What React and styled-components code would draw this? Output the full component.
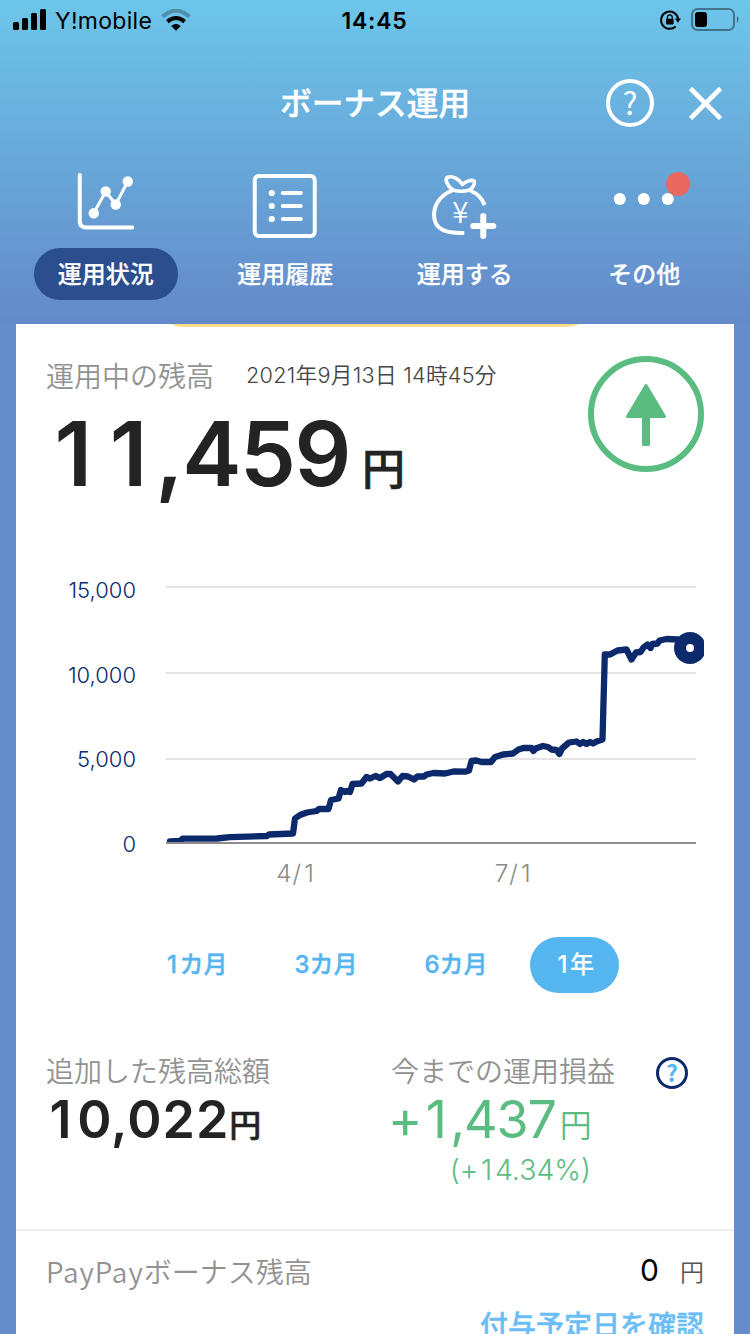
import React from "react";
import styled, { createGlobalStyle } from "styled-components";

const jp = `"Noto Sans CJK JP", sans-serif`;
const num = `Inter, "Noto Sans CJK JP", sans-serif`;

const GlobalStyle = createGlobalStyle`
    * {
        box-sizing: border-box;
    }
    body {
        margin: 0;
        background-color: #658ccb;
        font-family: ${jp};
    }
    svg {
        display: block;
        flex-shrink: 0;
    }
`;

const Screen = styled.div`
    width: 750px;
    height: 1334px;
    overflow: hidden;
    display: flex;
    flex-direction: column;
    background-color: #658ccb;
`;

const Header = styled.header`
    height: 324px;
    flex-shrink: 0;
    background: linear-gradient(#6dc6ea 0%, #68aada 46%, #6489c9 100%);
`;

const StatusBar = styled.div`
    height: 40px;
    padding: 0 11px 0 13px;
    display: grid;
    grid-template-columns: 1fr auto 1fr;
    align-items: center;
    color: #000;
    font-family: ${num};
`;

const StatusSide = styled.div`
    display: flex;
    align-items: center;
    justify-content: ${({ $end }) => ($end ? "flex-end" : "flex-start")};
    gap: ${({ $end }) => ($end ? "10px" : "9px")};
`;

const Carrier = styled.span`
    padding-top: 2px;
    font-size: 23px;
    line-height: 38px;
    letter-spacing: 0.3px;
`;

const Clock = styled.span`
    padding-top: 2px;
    margin-right: 3px;
    font-size: 23px;
    line-height: 38px;
    font-weight: 600;
    letter-spacing: 0.8px;
`;

const TitleBar = styled.div`
    height: 126px;
    padding: 0 28px;
    display: grid;
    grid-template-columns: 1fr auto 1fr;
    align-items: center;
`;

const Title = styled.h1`
    grid-column: 2;
    margin: 0;
    padding-bottom: 4px;
    color: #fff;
    font-size: 31.7px;
    line-height: 48px;
    font-weight: 500;
    -webkit-text-stroke: 0.4px #fff;
`;

const TitleActions = styled.div`
    display: flex;
    justify-content: flex-end;
    align-items: center;
    gap: 34px;
`;

const HelpButton = styled.button`
    width: ${({ $size }) => $size}px;
    height: ${({ $size }) => $size}px;
    padding: 0 0 ${({ $small }) => ($small ? 2 : 4)}px;
    border: ${({ $small }) => ($small ? "3px solid #0b296b" : "4px solid #fff")};
    border-radius: 50%;
    background: none;
    color: ${({ $small }) => ($small ? "#55b5ef" : "#fff")};
    font-family: ${jp};
    font-size: ${({ $small }) => ($small ? 23 : 31)}px;
    font-weight: ${({ $small }) => ($small ? 700 : 400)};
    line-height: 1;
    display: flex;
    align-items: center;
    justify-content: center;
`;

const Nav = styled.nav`
    padding: 4px 16px 0;
    display: grid;
    grid-template-columns: repeat(4, 1fr);
`;

const NavItem = styled.div`
    display: flex;
    flex-direction: column;
    align-items: center;
    gap: 6px;
`;

const IconBox = styled.div`
    position: relative;
    width: 72px;
    height: 72px;
`;

const Badge = styled.span`
    position: absolute;
    top: 2px;
    right: -10px;
    width: 24px;
    height: 24px;
    border-radius: 50%;
    background-color: #ea6860;
`;

const NavLabel = styled.span`
    width: 144px;
    height: 52px;
    border-radius: 26px;
    background-color: ${({ $active }) => ($active ? "#2b4e8e" : "transparent")};
    color: #fff;
    font-size: 24px;
    line-height: 49px;
    font-weight: 500;
    -webkit-text-stroke: 0.2px #fff;
    text-align: center;
`;

const Card = styled.main`
    width: 718px;
    height: 1010px;
    flex-shrink: 0;
    margin: 0 auto;
    background-color: #fff;
    overflow: hidden;
`;

const BannerEdge = styled.div`
    height: 3px;
    overflow: hidden;
    display: flex;
    align-items: flex-end;
    justify-content: center;
`;

const Banner = styled.div`
    width: 436px;
    height: 60px;
    flex-shrink: 0;
    border-radius: 26px;
    background-color: #fddd8c;
`;

const Balance = styled.section`
    height: 253px;
    padding: 29px 30px 0;
    display: flex;
    justify-content: space-between;
    align-items: flex-start;
`;

const BalanceHead = styled.div`
    display: flex;
    align-items: center;
    gap: 32px;
    height: 40px;
`;

const Label = styled.span`
    margin-bottom: 2px;
    color: #929292;
    font-size: 28px;
    line-height: 38px;
    font-weight: 350;
    white-space: nowrap;
`;

const Brand = styled.span`
    letter-spacing: 0.9px;
`;

const DateText = styled.span`
    margin-bottom: 3px;
    color: #444;
    font-family: ${num};
    font-size: 21.7px;
    line-height: 36px;
    font-weight: 350;
    letter-spacing: 0.25px;
    white-space: nowrap;
`;

// gives the narrow "1" the same advance as the other digits
const One = styled.span`
    display: inline-block;
    width: ${({ $width }) => $width}em;
    text-align: center;
`;

const BalanceAmount = styled.div`
    display: flex;
    align-items: baseline;
    gap: 12px;
    margin-left: -1px;
    color: #232323;
    font-family: ${num};
    font-size: 89px;
    line-height: 116px;
    font-weight: 600;
    letter-spacing: -1.5px;
    white-space: nowrap;
`;

const BalanceYen = styled.span`
    font-family: ${jp};
    font-size: 43px;
    line-height: 1;
    font-weight: 500;
    -webkit-text-stroke: 0.7px #232323;
    transform: translateY(-1px);
`;

const Trend = styled.div`
    width: 116px;
    height: 116px;
    padding-top: 2px;
    border: 6px solid #5abc80;
    border-radius: 50%;
    display: flex;
    align-items: center;
    justify-content: center;
`;

const ChartRow = styled.section`
    display: flex;
    padding-left: 30px;
`;

const YAxis = styled.div`
    width: 90px;
    margin-right: 30px;
    height: 270px;
    display: flex;
    flex-direction: column;
    color: #0b296b;
    font-family: ${num};
    font-size: 22px;
    font-weight: 300;
    line-height: 20px;
    gap: 64.5px;
    text-align: right;
`;

const XAxis = styled.div`
    height: 46px;
    padding-left: 172px;
    display: flex;
    color: #8a8a8a;
    font-family: ${num};
    font-size: 24.5px;
    line-height: 46px;
    font-weight: 300;
    letter-spacing: 0.9px;
`;

const XTick = styled.span`
    width: 217.5px;
    text-align: center;
`;

const Periods = styled.div`
    margin: 41px 0 0 124px;
    display: flex;
    gap: 18px;
`;

const Period = styled.button`
    width: ${({ $active }) => ($active ? 89 : 112)}px;
    height: 56px;
    padding: 0 0 1px;
    border: none;
    border-radius: 28px;
    background-color: ${({ $active }) => ($active ? "#55b5ef" : "transparent")};
    color: ${({ $active }) => ($active ? "#fff" : "#55b5ef")};
    font-family: ${num};
    font-size: 24px;
    line-height: 54px;
    font-weight: 500;
    -webkit-text-stroke: ${({ $active }) => ($active ? 0.1 : 0.4)}px;
    white-space: nowrap;
`;

const Totals = styled.section`
    height: 236px;
    padding: 58px 46px 0 30px;
    display: flex;
    align-items: flex-start;
`;

const Total = styled.div`
    width: ${({ $first }) => ($first ? "345px" : "224px")};
    color: ${({ $first }) => ($first ? "#232323" : "#5abc80")};
    display: flex;
    flex-direction: column;
`;

const TotalAmount = styled.div`
    display: flex;
    align-items: baseline;
    gap: ${({ $bold }) => ($bold ? 0 : 4)}px;
    margin-left: ${({ $bold }) => ($bold ? -1 : -3)}px;
    font-family: ${num};
    font-size: 52px;
    line-height: 57px;
    font-weight: ${({ $bold }) => ($bold ? 600 : 400)};
    white-space: nowrap;
    letter-spacing: ${({ $bold }) => ($bold ? 1 : -1.2)}px;
`;

const TotalYen = styled.span`
    font-family: ${jp};
    font-size: 32px;
    line-height: 1;
    font-weight: ${({ $bold }) => ($bold ? 500 : 350)};
    -webkit-text-stroke: ${({ $bold }) => ($bold ? 0.6 : 0)}px;
    transform: translateY(-1px);
`;

const Percent = styled.span`
    width: 200px;
    text-align: right;
    font-family: ${num};
    font-size: 28.5px;
    line-height: 44px;
    font-weight: 350;
`;

const HelpSlot = styled.div`
    margin-left: auto;
    padding-top: 6px;
`;

const BonusRow = styled.section`
    border-top: 2px solid #eee;
    height: 84px;
    padding: 0 30px;
    display: flex;
    align-items: center;
    justify-content: space-between;
`;

const BonusValue = styled.span`
    margin-bottom: 3px;
    display: flex;
    align-items: baseline;
    gap: 21px;
    color: #000;
    font-family: ${num};
    font-size: 30px;
    line-height: 40px;
`;

const BonusYen = styled.span`
    color: #555;
    font-family: ${jp};
    font-size: 24px;
    font-weight: 350;
`;

const BonusLink = styled.a`
    display: block;
    padding: 0 30px;
    margin-top: -9px;
    color: #6bbdf6;
    font-size: 28px;
    line-height: 40px;
    font-weight: 500;
    -webkit-text-stroke: 0.4px #6bbdf6;
    text-align: right;
`;

const Figures = ({ value, one = 0.62 }) => (
    <span>
        {[...value].map((char, i) =>
            char === "1" ? (
                <One key={i} $width={one}>
                    1
                </One>
            ) : (
                char
            )
        )}
    </span>
);

const Signal = () => (
    <svg width="33" height="22" viewBox="0 0 33 22">
        <rect x="0" y="13" width="6" height="8" rx="1.5" />
        <rect x="9" y="9" width="6" height="12" rx="1.5" />
        <rect x="18" y="4" width="6" height="17" rx="1.5" />
        <rect x="27" y="0" width="6" height="21" rx="1.5" />
    </svg>
);

const Wifi = () => (
    <svg width="30" height="22" viewBox="0 0 30 22" fill="none">
        <path
            d="M1.6 7.6 Q15 -4.2 28.4 7.6"
            stroke="#000"
            strokeOpacity="0.27"
            strokeWidth="4"
        />
        <path d="M6.4 12.6 Q15 5.4 23.6 12.6" stroke="#000" strokeWidth="4" />
        <path d="M10.2 17 Q15 13 19.8 17 L15 21.8 Z" fill="#000" />
    </svg>
);

const RotationLock = () => (
    <svg width="21" height="20" viewBox="0 0 21 20" fill="none">
        <path
            d="M15.6 16.4 A8.6 8.6 0 1 1 18.2 9"
            stroke="#000"
            strokeWidth="2"
        />
        <path d="M14.8 8.4 H21 L17.9 12.8 Z" fill="#000" />
        <rect x="6" y="8.8" width="7.6" height="5.6" rx="0.8" fill="#000" />
        <path
            d="M7.4 9 V7.2 A2.4 2.4 0 0 1 12.2 7.2 V9"
            stroke="#000"
            strokeWidth="1.3"
        />
    </svg>
);

const Battery = () => (
    <svg width="48" height="24" viewBox="0 0 48 24">
        <rect
            x="1"
            y="1"
            width="42"
            height="21"
            rx="5.5"
            fill="none"
            stroke="#000"
            strokeOpacity="0.4"
            strokeWidth="2"
        />
        <rect x="4" y="4" width="12" height="15" rx="3" />
        <path d="M46 8 Q49 11.5 46 15 Z" fillOpacity="0.5" />
    </svg>
);

const Close = () => (
    <svg width="34" height="34" viewBox="0 0 34 34">
        <path
            d="M2.5 2.5 L32.5 32.5 M32.5 2.5 L2.5 32.5"
            stroke="#fff"
            strokeWidth="4.6"
            fill="none"
        />
    </svg>
);

const ChartIcon = () => (
    <svg width="72" height="72" viewBox="69.75 170 72 72" fill="none">
        <path
            d="M79.5 175 V221 Q79.5 227.5 86 227.5 H132"
            stroke="#fff"
            strokeWidth="4"
            strokeLinecap="round"
        />
        <path
            d="M93.5 213 L105.5 191.5 L115.5 204.5 L127.5 181.5"
            stroke="#fff"
            strokeWidth="3"
        />
        <g fill="#fff">
            <circle cx="93.5" cy="213.2" r="5.2" />
            <circle cx="105.5" cy="191.5" r="5.2" />
            <circle cx="115.5" cy="204.5" r="5.2" />
            <circle cx="127.5" cy="181.5" r="5.2" />
        </g>
    </svg>
);

const ListIcon = () => (
    <svg width="72" height="72" viewBox="249.25 170 72 72" fill="none">
        <rect
            x="255"
            y="176"
            width="60"
            height="60"
            rx="4"
            stroke="#fff"
            strokeWidth="4"
        />
        <g fill="#fff">
            <circle cx="272" cy="193" r="3.1" />
            <circle cx="272" cy="206" r="3.1" />
            <circle cx="272" cy="219" r="3.1" />
        </g>
        <path
            d="M283 193 H301 M283 206 H301 M283 219 H301"
            stroke="#fff"
            strokeWidth="4"
            strokeLinecap="round"
        />
    </svg>
);

const BagIcon = () => (
    <svg width="72" height="72" viewBox="428.75 170 72 72" fill="none">
        <g stroke="#fff" strokeWidth="4">
            <path d="M452 190.5 C440 195 433.8 205 433.8 215 C433.8 229 445 233.6 464 233" />
            <path d="M470 190.5 C477 193.5 482 198.5 484.4 205" />
            <path
                d="M452.5 190 C447 186 444 179 447.5 177.2 C453 175.5 459 179.5 462.3 184.5 C466 181 471 179.5 473.8 181 C475.3 183.5 472.5 188 469.5 190 Q461 192.6 452.5 190 Z"
                strokeWidth="3.6"
                strokeLinejoin="round"
            />
        </g>
        <text
            x="460"
            y="222.7"
            fill="#fff"
            fontFamily="Noto Sans CJK JP"
            fontWeight="350"
            fontSize="29.5"
            textAnchor="middle"
        >
            ¥
        </text>
        <path
            d="M483 216 V236 M473 226 H493"
            stroke="#fff"
            strokeWidth="6"
            strokeLinecap="round"
        />
    </svg>
);

const MoreIcon = () => (
    <svg width="72" height="72" viewBox="608.25 170 72 72" fill="#fff">
        <circle cx="620" cy="199" r="6" />
        <circle cx="644" cy="199" r="6" />
        <circle cx="668" cy="199" r="6" />
    </svg>
);

const ArrowUp = () => (
    <svg width="42" height="62" viewBox="0 0 42 62" fill="#5abc80">
        <path
            d="M21 1.5 L39.5 32.5 H2.5 Z"
            stroke="#5abc80"
            strokeWidth="3"
            strokeLinejoin="round"
        />
        <rect x="17" y="30" width="8" height="32" rx="1.5" />
    </svg>
);

// x and y of each day's balance on the 166..704 / 580..850 plot area
const points = [
    [170, 841.5], [180, 841], [182.5, 838.7], [217, 838.5], [230, 837.2],
    [267, 836], [269, 834.5], [293, 833.5], [295, 818.5], [300, 815],
    [307, 812.5], [316.5, 811], [319, 809], [328.5, 809], [331, 800],
    [338.5, 798.5], [341, 790], [345, 792], [347, 791], [350, 792],
    [352.5, 784], [361.5, 783.5], [366.5, 777], [370, 778.5], [375.5, 776],
    [380, 778], [386.5, 774], [390.5, 774], [398, 781.5], [402.5, 776],
    [408, 776.5], [414, 779.5], [417.5, 776.5], [424, 776.5], [426.5, 774.5],
    [433.5, 773], [445, 773.5], [453.5, 771.5], [465, 771.7], [469, 770.5],
    [471.5, 761], [476.5, 760.5], [481.5, 762], [491, 762], [495, 757],
    [503, 754.5], [513, 753.5], [518.5, 749.5], [523.5, 748], [531.5, 748],
    [533.5, 751], [535.5, 748.5], [543, 746], [548, 747], [551.5, 749.5],
    [556.5, 750], [559.5, 754], [562, 748.5], [569, 742.5], [576.5, 741.5],
    [580, 744], [583, 742], [586.5, 744], [590, 742], [593, 743.5],
    [596.5, 741.5], [602.5, 739.5], [604.8, 654.5], [610, 654.5],
    [617.5, 650.5], [626.5, 649.5], [631.5, 659.5], [636, 652.5],
    [640.5, 652], [643.5, 647.5], [647.5, 644.5], [650.5, 648], [652.5, 644],
    [657.5, 643.5], [659.5, 640.5], [666.5, 639], [678, 639.5], [688, 646],
];

const BalanceChart = () => (
    <svg width="538" height="270" viewBox="166 580 538 270" fill="none">
        <path
            d="M166 587 H696 M166 673 H696 M166 759 H696"
            stroke="#e4e4e4"
            strokeWidth="2"
        />
        <polyline
            points={points.map((p) => p.join(",")).join(" ")}
            stroke="#0b296b"
            strokeWidth="6.3"
            strokeLinecap="round"
            strokeLinejoin="round"
        />
        <path d="M166 844 H696" stroke="#fff" strokeWidth="4" />
        <path d="M166 843 H696" stroke="#8f8c8f" strokeWidth="2" />
        <circle cx="690" cy="648" r="16" fill="#0b296b" />
        <circle cx="690" cy="648" r="4" fill="#fff" />
    </svg>
);

const tabs = [
    { label: "運用状況", Icon: ChartIcon, active: true },
    { label: "運用履歴", Icon: ListIcon },
    { label: "運用する", Icon: BagIcon },
    { label: "その他", Icon: MoreIcon, badge: true },
];

const periods = ["1カ月", "3カ月", "6カ月", "1年"];

const App = () => {
    return (
        <Screen>
            <GlobalStyle />
            <Header>
                <StatusBar>
                    <StatusSide>
                        <Signal />
                        <Carrier>Y!mobile</Carrier>
                        <Wifi />
                    </StatusSide>
                    <Clock>14:45</Clock>
                    <StatusSide $end>
                        <RotationLock />
                        <Battery />
                    </StatusSide>
                </StatusBar>
                <TitleBar>
                    <Title>ボーナス運用</Title>
                    <TitleActions>
                        <HelpButton $size={48}>?</HelpButton>
                        <Close />
                    </TitleActions>
                </TitleBar>
                <Nav>
                    {tabs.map(({ label, Icon, active, badge }) => (
                        <NavItem key={label}>
                            <IconBox>
                                <Icon />
                                {badge && <Badge />}
                            </IconBox>
                            <NavLabel $active={active}>{label}</NavLabel>
                        </NavItem>
                    ))}
                </Nav>
            </Header>

            <Card>
                <BannerEdge>
                    <Banner />
                </BannerEdge>
                <Balance>
                    <div>
                        <BalanceHead>
                            <Label>運用中の残高</Label>
                            <DateText>2021年9月13日 14時45分</DateText>
                        </BalanceHead>
                        <BalanceAmount>
                            <Figures value="11,459" one={0.62} />
                            <BalanceYen>円</BalanceYen>
                        </BalanceAmount>
                    </div>
                    <Trend>
                        <ArrowUp />
                    </Trend>
                </Balance>

                <ChartRow>
                    <YAxis>
                        <span>15,000</span>
                        <span>10,000</span>
                        <span>5,000</span>
                        <span>0</span>
                    </YAxis>
                    <BalanceChart />
                </ChartRow>
                <XAxis>
                    <XTick>
                        <Figures value="4/1" />
                    </XTick>
                    <XTick>
                        <Figures value="7/1" />
                    </XTick>
                </XAxis>
                <Periods>
                    {periods.map((period) => (
                        <Period key={period} $active={period === "1年"}>
                            <Figures value={period} />
                        </Period>
                    ))}
                </Periods>

                <Totals>
                    <Total $first>
                        <Label>追加した残高総額</Label>
                        <TotalAmount $bold>
                            <Figures value="10,022" />
                            <TotalYen $bold>円</TotalYen>
                        </TotalAmount>
                    </Total>
                    <Total>
                        <Label>今までの運用損益</Label>
                        <TotalAmount>
                            <Figures value="+1,437" one={0.56} />
                            <TotalYen>円</TotalYen>
                        </TotalAmount>
                        <Percent>
                            <Figures value="(+14.34%)" one={0.58} />
                        </Percent>
                    </Total>
                    <HelpSlot>
                        <HelpButton $size={32} $small>
                            ?
                        </HelpButton>
                    </HelpSlot>
                </Totals>

                <BonusRow>
                    <Label>
                        <Brand>PayPay</Brand>ボーナス残高
                    </Label>
                    <BonusValue>
                        0<BonusYen>円</BonusYen>
                    </BonusValue>
                </BonusRow>
                <BonusLink>付与予定日を確認</BonusLink>
            </Card>
        </Screen>
    );
};

export default App;
